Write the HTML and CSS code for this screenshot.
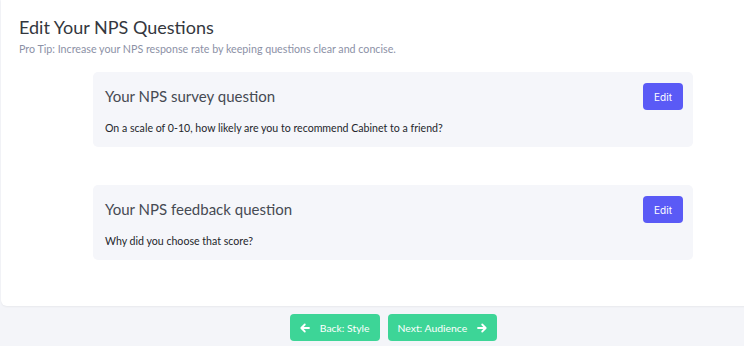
FILE: index.html
```html
<!DOCTYPE html>
<html>

<head>
  <link rel="stylesheet" href="styles.css">
</head>

<body>
  <div class="panel">
    <h1>Edit Your NPS Questions</h1>
    <p class="tip">Pro Tip: Increase your NPS response rate by keeping questions clear and concise.</p>

    <div class="questions">
      <div class="question">
        <div class="question-head">
          <h2>Your NPS survey question</h2>
          <button class="edit-btn">Edit</button>
        </div>
        <p class="question-text">On a scale of 0-10, how likely are you to recommend Cabinet to a friend?</p>
      </div>

      <div class="question">
        <div class="question-head">
          <h2>Your NPS feedback question</h2>
          <button class="edit-btn">Edit</button>
        </div>
        <p class="question-text">Why did you choose that score?</p>
      </div>
    </div>
  </div>

  <div class="footer">
    <button class="step-btn">
      <svg width="10" height="10" viewBox="0 0 10 10"><path d="M9 5H1.5M4.8 1.5L1.3 5l3.5 3.5" fill="none" stroke="#fff" stroke-width="1.8" stroke-linecap="round" stroke-linejoin="round"/></svg>
      Back: Style
    </button>
    <button class="step-btn">
      Next: Audience
      <svg width="10" height="10" viewBox="0 0 10 10"><path d="M1 5h7.5M5.2 1.5L8.7 5l-3.5 3.5" fill="none" stroke="#fff" stroke-width="1.8" stroke-linecap="round" stroke-linejoin="round"/></svg>
    </button>
  </div>
</body>

</html>
```

FILE: styles.css
```css
body {
  margin: 0;
  background: #f4f5f9;
  font-family: Lato, "Open Sans", sans-serif;
  overflow: hidden;
}

.panel {
  margin-left: 1px;
  margin-right: -8px;
  height: 306px;
  box-sizing: border-box;
  padding: 14px 18px 0;
  background: #fff;
  border-radius: 0 0 0 6px;
  box-shadow: 0 1px 2px rgba(0, 0, 0, 0.05);
}
h1 {
  font-weight: normal;
  font-size: 18px;
  line-height: 26px;
  color: #34373e;
  margin: 0;
}
.tip {
  font-size: 10.7px;
  line-height: 14px;
  color: #8c91a6;
  margin: 2px 0 0;
}

.questions {
  display: flex;
  flex-direction: column;
  gap: 38px;
  width: 600px;
  margin: 16px 0 0 74px;
}
.question {
  background: #f5f6fa;
  border-radius: 5px;
  height: 75px;
  box-sizing: border-box;
  padding: 11px 10px 0 12px;
}
.question-head {
  display: flex;
  justify-content: space-between;
  align-items: center;
  height: 27px;
}
h2 {
  font-weight: normal;
  font-size: 15px;
  color: #464a53;
  margin: 0 0 2px;
}
.edit-btn {
  width: 40px;
  height: 27px;
  padding: 0;
  border: 0;
  border-radius: 4px;
  background: #5a5af6;
  color: #fff;
  font: 10px Inter, "Noto Sans", sans-serif;
}
.question-text {
  font-size: 10.6px;
  line-height: 14px;
  color: #24262b;
  margin: 11px 0 0;
}

.footer {
  display: flex;
  justify-content: center;
  gap: 8px;
  padding-top: 8px;
  padding-left: 43px;
}
.step-btn {
  display: flex;
  align-items: center;
  gap: 10px;
  height: 27px;
  padding: 0 10px;
  border: 0;
  border-radius: 4px;
  background: #3dd597;
  color: #fff;
  font-family: Lato, "Open Sans", sans-serif;
  font-size: 10.4px;
}
```
